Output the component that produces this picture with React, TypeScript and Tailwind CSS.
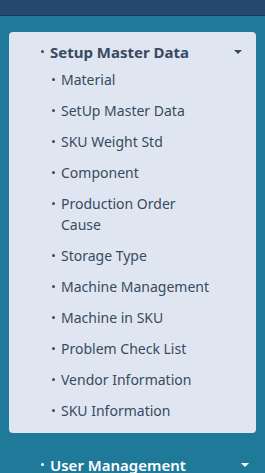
import React from "react";

const items: string[] = [
  "Material",
  "SetUp Master Data",
  "SKU Weight Std",
  "Component",
  "Production Order Cause",
  "Storage Type",
  "Machine Management",
  "Machine in SKU",
  "Problem Check List",
  "Vendor Information",
  "SKU Information",
];

const Caret = ({ className }: { className: string }) => (
  <svg width="8" height="4" viewBox="0 0 8 4" className={className}>
    <path d="M0 0h8L4 4z" fill="currentColor" />
  </svg>
);

const Dot = ({ className }: { className: string }) => (
  <span className="flex h-[21px] w-[9px] shrink-0 items-center">
    <span className={`block h-[3px] w-[3px] rounded-full ${className}`} />
  </span>
);

export default function App() {
  return (
    <div
      className="h-[473px] w-[265px] overflow-hidden bg-[#1f7a99]"
      style={{ fontFamily: "'Noto Sans', sans-serif" }}
    >
      <div className="h-[16px] border-b border-[#1b3a57] bg-[#25496d]" />
      <div className="mx-[9px] mt-[16px] rounded-[4px] bg-[#dfe6f1] pb-[7px] pt-[9px] text-[#384a5f]">
        <div className="flex items-center pl-[32px] pr-[14px]">
          <Dot className="bg-[#384a5f]" />
          <span className="flex-1 text-[15px] font-bold leading-[20px]">
            Setup Master Data
          </span>
          <Caret className="text-[#384a5f]" />
        </div>
        <ul className="mt-[2px] pl-[43px] pr-[40px]">
          {items.map((it) => (
            <li key={it} className="flex py-[5px] text-[14px] leading-[21px]">
              <Dot className="bg-[#384a5f]" />
              <span>{it}</span>
            </li>
          ))}
        </ul>
      </div>
      <div className="mt-[21px] flex items-center pl-[41px] pr-[16px] text-white">
        <Dot className="bg-white" />
        <span className="flex-1 text-[15px] font-semibold leading-[20px]">
          User Management
        </span>
        <Caret className="text-white" />
      </div>
    </div>
  );
}
